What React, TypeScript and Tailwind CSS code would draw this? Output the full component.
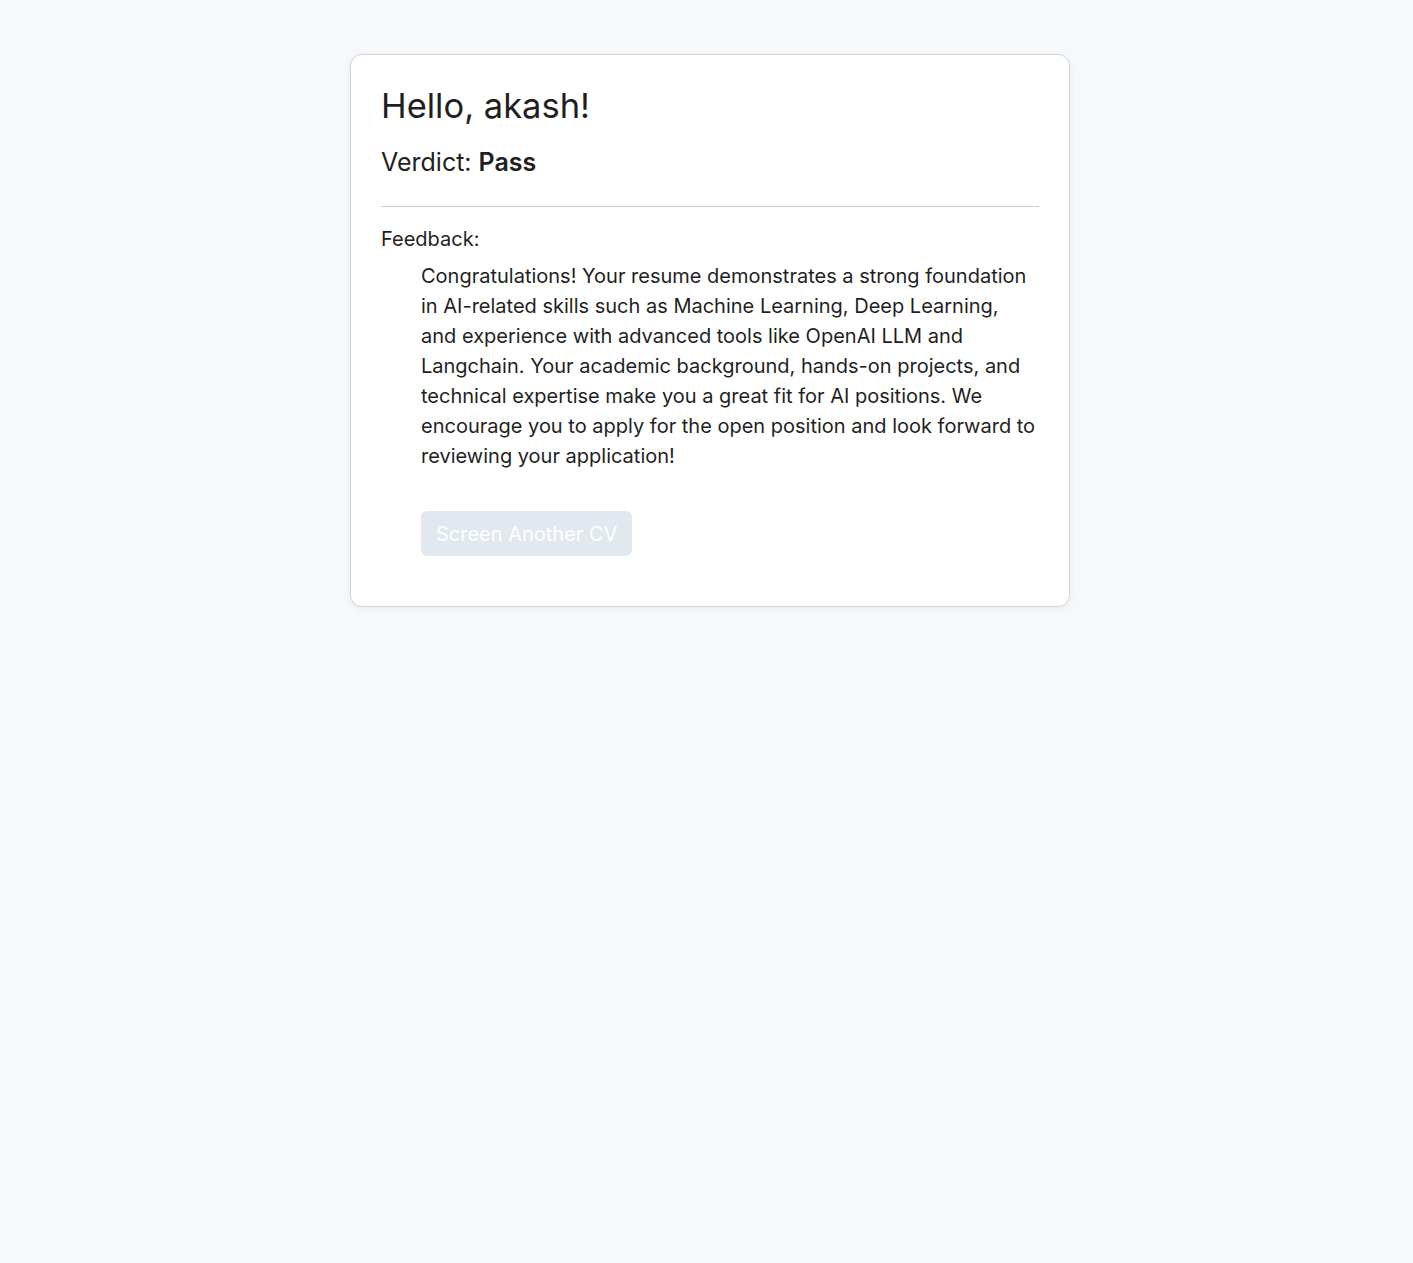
export default function App() {
  return (
    <div className="min-h-[1263px] w-full bg-[#f5f9fc] pt-[54px] pl-[7px]" style={{ fontFamily: 'Inter, "Noto Sans", sans-serif' }}>
      <div className="mx-auto w-[720px] rounded-[12px] border border-[#d4d4d8] bg-white px-[30px] pt-[30px] pb-[50px] text-[#1f1f23] shadow-[0_2px_8px_rgba(0,0,0,0.06)]">
        <h1 className="text-[34.5px] leading-[42px]">Hello, akash!</h1>
        <h2 className="mt-[20px] text-[25px] leading-[30px]">
          Verdict: <span className="font-semibold">Pass</span>
        </h2>
        <div className="mt-[29px] h-px bg-[#cfcfcf]" />
        <div className="mt-[19px] text-[20px] leading-[26px]">Feedback:</div>
        <div className="mt-[9px] pl-[40px]">
          <p className="text-[20px] leading-[30px]">
            Congratulations! Your resume demonstrates a strong foundation in AI-related skills such as Machine Learning, Deep Learning, and experience with advanced tools like OpenAI LLM and Langchain. Your academic background, hands-on projects, and technical expertise make you a great fit for AI positions. We encourage you to apply for the open position and look forward to reviewing your application!
          </p>
          <button className="mt-[40px] h-[45px] rounded-[6px] bg-[#e2e8f0] px-[15px] text-[20px] text-white">
            Screen Another CV
          </button>
        </div>
      </div>
    </div>
  );
}
